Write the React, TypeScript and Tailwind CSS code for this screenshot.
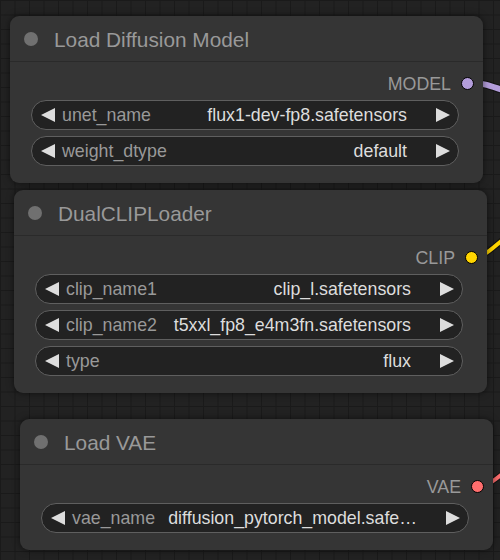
import React from 'react'

type Widget = { label: string; value: string }

interface NodeProps {
  title: string
  output: string
  dotColor: string
  widgets: Widget[]
  className: string
}

function Tri({ dir }: { dir: 'left' | 'right' }) {
  return (
    <svg width="14" height="14" viewBox="0 0 14 14" className="shrink-0">
      {dir === 'left'
        ? <polygon points="14,0 14,14 0,7" fill="#dddddd" />
        : <polygon points="0,0 0,14 14,7" fill="#dddddd" />}
    </svg>
  )
}

function Pill({ label, value }: Widget) {
  return (
    <div className="h-[30px] rounded-full border border-[#5f5f5f] bg-[#222222] flex items-center pl-[9px] pr-[8px] leading-[22px]">
      <Tri dir="left" />
      <span className="ml-[7px] text-[#999999] whitespace-nowrap">{label}</span>
      <span className="flex-1 min-w-0 ml-[12px] text-right text-[#dddddd] whitespace-nowrap">{value}</span>
      <span className="ml-[29px] flex"><Tri dir="right" /></span>
    </div>
  )
}

function GraphNode({ title, output, dotColor, widgets, className }: NodeProps) {
  return (
    <div className={`absolute w-[473px] rounded-[9px] bg-[#353535] shadow-[0_0_7px_rgba(0,0,0,0.55)] ${className}`}>
      {/* Title bar */}
      <div className="h-[46px] flex items-center pl-[14px] border-b border-[#2a2a2a]">
        <div className="w-[14px] h-[14px] rounded-full bg-[#707070]" />
        <span className="ml-[16px] text-[20.8px] text-[#999999] leading-[26px] translate-y-[1px]">{title}</span>
      </div>

      <div className="pt-[7px] pb-[17px]">
        {/* Output slot */}
        <div className="h-[29px] flex items-center justify-end pr-[9px]">
          <span className="text-[#999999] leading-[22px]">{output}</span>
          <div
            className="ml-[10px] w-[13px] h-[13px] rounded-full border-[1.5px] border-black"
            style={{ backgroundColor: dotColor }}
          />
        </div>

        {/* Widgets */}
        <div className="mt-[2px] ml-[21px] mr-[24px] flex flex-col gap-[6px]">
          {widgets.map(w => <Pill key={w.label} {...w} />)}
        </div>
      </div>
    </div>
  )
}

export default function App() {
  return (
    <div className="relative w-[500px] h-[560px] overflow-hidden bg-[#222222] bg-[linear-gradient(to_right,#1a1a1a_1px,transparent_1px),linear-gradient(to_bottom,#1a1a1a_1px,transparent_1px)] bg-[size:14.5px_14.5px] font-['Liberation_Sans',Arial,sans-serif] text-[17.8px]">
      {/* Links */}
      <svg className="absolute inset-0" width="500" height="560">
        <path d="M468 83 C 485 83, 490 86, 506 91" stroke="#111" strokeWidth="8" fill="none" />
        <path d="M468 83 C 485 83, 490 86, 506 91" stroke="#b39ddb" strokeWidth="6" fill="none" />
        <path d="M472 257 C 485 257, 490 250, 506 237" stroke="#111" strokeWidth="6" fill="none" />
        <path d="M472 257 C 485 257, 490 250, 506 237" stroke="#ffd500" strokeWidth="4" fill="none" />
        <path d="M479 486 C 488 486, 492 482, 506 471" stroke="#111" strokeWidth="6" fill="none" />
        <path d="M479 486 C 488 486, 492 482, 506 471" stroke="#ff6e6e" strokeWidth="4" fill="none" />
      </svg>

      <GraphNode
        className="left-[10px] top-[16px]"
        title="Load Diffusion Model"
        output="MODEL"
        dotColor="#b39ddb"
        widgets={[
          { label: 'unet_name', value: 'flux1-dev-fp8.safetensors' },
          { label: 'weight_dtype', value: 'default' },
        ]}
      />

      <GraphNode
        className="left-[14px] top-[190px]"
        title="DualCLIPLoader"
        output="CLIP"
        dotColor="#ffd500"
        widgets={[
          { label: 'clip_name1', value: 'clip_l.safetensors' },
          { label: 'clip_name2', value: 't5xxl_fp8_e4m3fn.safetensors' },
          { label: 'type', value: 'flux' },
        ]}
      />

      <GraphNode
        className="left-[20px] top-[419px]"
        title="Load VAE"
        output="VAE"
        dotColor="#ff6e6e"
        widgets={[
          { label: 'vae_name', value: 'diffusion_pytorch_model.safe…' },
        ]}
      />
    </div>
  )
}
